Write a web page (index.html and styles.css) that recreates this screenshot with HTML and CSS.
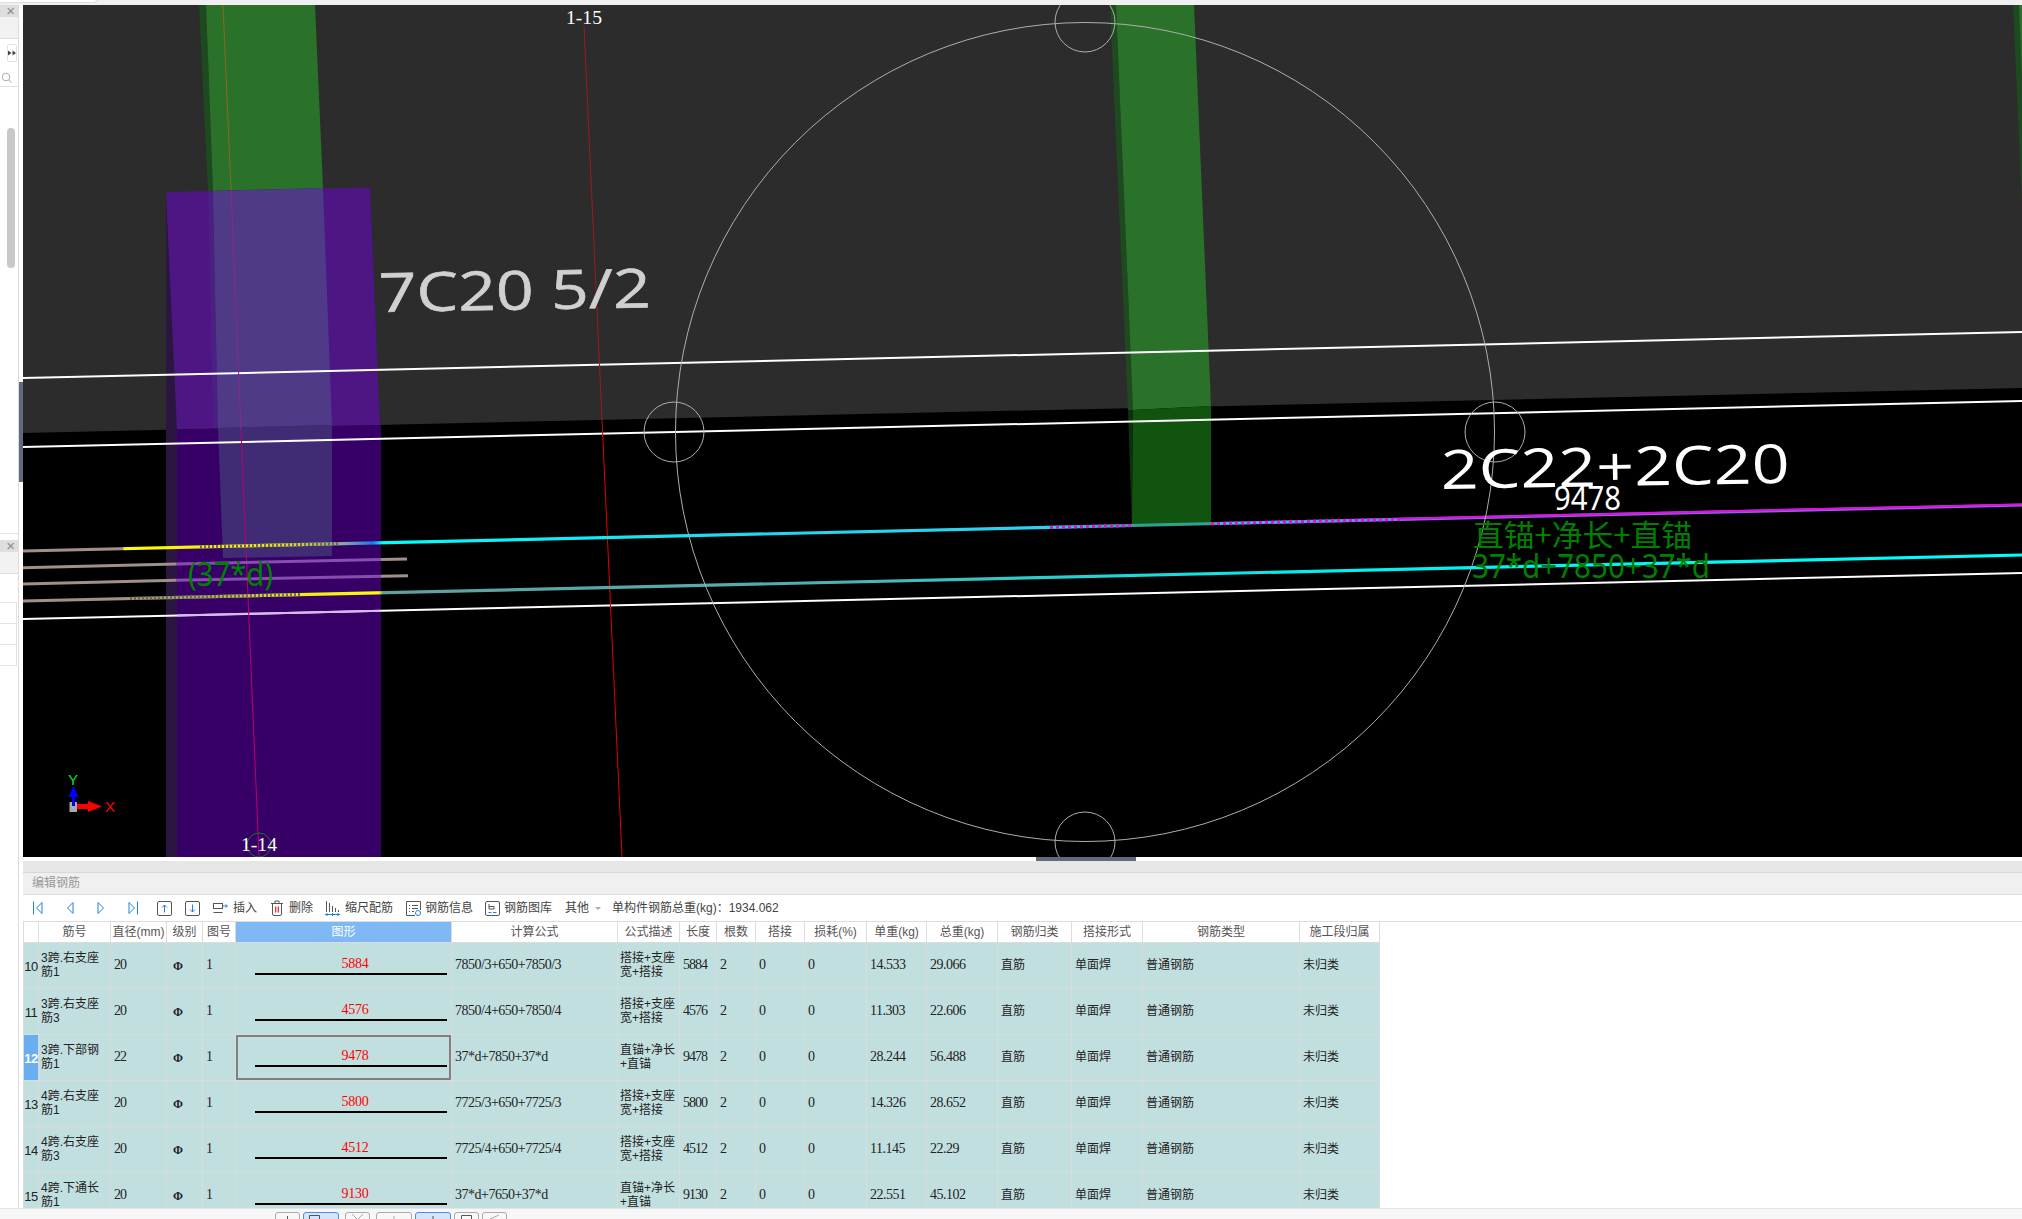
FILE: index.html
```html
<!DOCTYPE html>
<html lang="zh-CN">
<head>
<meta charset="utf-8">
<title>编辑钢筋</title>
<link rel="stylesheet" href="styles.css">
</head>
<body>
<div class="app">
  <div class="topbar"><div class="toptab"></div></div>
  <div class="workspace">
    <aside class="sidebar">
      <div class="side-inner">
        <div class="side-head">×</div>
        <div class="side-sub"></div>
        <div class="side-tools">
          <div class="side-btn"><svg width="8" height="6" viewBox="0 0 8 6" class="ico"><path d="M0 .5L3.5 3 0 5.5ZM4.5 .5L8 3 4.5 5.5Z" class="f-btn"/></svg></div>
        </div>
        <div class="side-search">
          <svg width="11" height="11" viewBox="0 0 11 11" class="ico"><circle cx="5" cy="5" r="3.8" class="s-gray"/><path d="M8 8l2.5 2.5" class="s-gray"/></svg>
        </div>
        <div class="side-scroll"><div class="thumb"></div></div>
        <div class="side-head">×</div>
        <div class="side-sub"></div>
        <div class="side-list">
          <div class="side-row"></div>
          <div class="side-row"></div>
          <div class="side-row"></div>
        </div>
      </div>
      <div class="side-gutter"><div class="gutter-handle"></div></div>
    </aside>
    <main class="main">
      <svg class="scene" width="1999" height="852" viewBox="23 5 1999 852">
        <defs>
          <linearGradient id="barTop" gradientUnits="userSpaceOnUse" x1="23" y1="0" x2="2022" y2="0">
            <stop offset="0" stop-color="#a09088"/><stop offset="0.05" stop-color="#a09088"/><stop offset="0.0505" stop-color="#ffff00"/>
            <stop offset="0.13" stop-color="#e8e020"/><stop offset="0.16" stop-color="#8aa8a0"/><stop offset="0.175" stop-color="#1a7af0"/>
            <stop offset="0.18" stop-color="#00ffff"/><stop offset="0.36" stop-color="#20d8f0"/><stop offset="0.515" stop-color="#30d0f0"/>
            <stop offset="0.555" stop-color="#30a090"/><stop offset="0.595" stop-color="#30a090"/><stop offset="0.6" stop-color="#40c0f0"/>
            <stop offset="0.72" stop-color="#9060f0"/><stop offset="1" stop-color="#a060f0"/>
          </linearGradient>
          <linearGradient id="barBottom" gradientUnits="userSpaceOnUse" x1="23" y1="0" x2="2022" y2="0">
            <stop offset="0" stop-color="#a09088"/><stop offset="0.05" stop-color="#a09088"/><stop offset="0.09" stop-color="#a8a860"/>
            <stop offset="0.13" stop-color="#e8e820"/><stop offset="0.178" stop-color="#ffff00"/><stop offset="0.18" stop-color="#60a0a0"/>
            <stop offset="0.4" stop-color="#50b0b0"/><stop offset="0.65" stop-color="#00f0f0"/><stop offset="1" stop-color="#00ffff"/>
          </linearGradient>
        </defs>
        <rect x="23" y="5" width="1999" height="852" class="f-black"/>
        <polygon points="23,5 2022,5 2022,388 23,433" class="f-upper"/>
        <polygon points="199,5 206,5 213,192 208,192" class="f-green-side"/>
        <polygon points="206,5 315,5 323,188 213,191" class="f-green"/>
        <polygon points="1110,5 1116,5 1133,410 1128,410" class="f-green-side"/>
        <polygon points="1128,410 1133,410 1132,526" class="f-green-side-low"/>
        <polygon points="1116,5 1194,5 1211,406 1133,410" class="f-green"/>
        <polygon points="1133,410 1211,406 1211,523 1132,526" class="f-green-low"/>
        <polygon points="2013,5 2022,5 2022,206" class="f-green-side"/>
        <polygon points="2019,5 2022,5 2022,80" class="f-green"/>
        <polygon points="166,192 177,430 177,857 166,857" class="f-purple-side"/>
        <polygon points="166,192 370,187.5 380,425 177,429.5" class="f-purple"/>
        <polygon points="177,429.5 380,425 381,425 381,857 177,857" class="f-purple-low"/>
        <polygon points="208,192 213,192 218,428 213,428" class="f-purple-strip"/>
        <polygon points="213,191 323,188 332,425 218,428" class="f-overlay"/>
        <polygon points="218,428 332,425 332,556 223,558" class="f-overlay-low"/>

        <line x1="23" y1="378" x2="2022" y2="332" class="s-white"/>
        <line x1="23" y1="447" x2="2022" y2="401" class="s-white"/>
        <line x1="23" y1="619" x2="2022" y2="573" class="s-white"/>
        <line x1="177" y1="615.4" x2="381" y2="610.8" class="s-pale"/>

        <line x1="584" y1="26" x2="602.5" y2="430" class="s-red-dim"/>
        <line x1="602.5" y1="430" x2="622" y2="857" class="s-red"/>
        <line x1="223" y1="5" x2="231" y2="190" class="s-tan"/>
        <line x1="231" y1="190" x2="241" y2="430" class="s-plum"/>
        <line x1="241" y1="430" x2="259" y2="857" class="s-magenta"/>

        <line x1="23" y1="567.7" x2="176" y2="564" class="s-bar-gray"/>
        <line x1="176" y1="564" x2="381" y2="559.6" class="s-bar-purple"/>
        <line x1="381" y1="559.6" x2="407" y2="559" class="s-bar-gray"/>
        <line x1="23" y1="584" x2="176" y2="580.2" class="s-bar-gray"/>
        <line x1="176" y1="580.2" x2="381" y2="576.2" class="s-bar-purple"/>
        <line x1="381" y1="576.2" x2="408" y2="575.7" class="s-bar-gray"/>
        <line x1="23" y1="551" x2="2022" y2="505" class="s-bar-top"/>
        <line x1="23" y1="601" x2="2022" y2="555" class="s-bar-bottom"/>
        <line x1="200" y1="547" x2="340" y2="543.7" class="s-dots-dark"/>
        <line x1="130" y1="598.5" x2="300" y2="594.6" class="s-dots-dark"/>
        <line x1="1050" y1="527.4" x2="1132" y2="525.5" class="s-dots-magenta"/>
        <line x1="1211" y1="523.7" x2="1400" y2="519.3" class="s-dots-magenta"/>
        <line x1="1400" y1="518.8" x2="2022" y2="504.5" class="s-thin-magenta"/>

        <circle cx="1085" cy="432" r="409.5" class="s-circle"/>
        <circle cx="1085" cy="22" r="30" class="s-circle"/>
        <circle cx="1085" cy="842" r="30" class="s-circle"/>
        <circle cx="674" cy="432" r="30" class="s-circle"/>
        <circle cx="1495" cy="432" r="30" class="s-circle"/>
        <circle cx="259" cy="845" r="12" class="s-axis-circle"/>

        <text x="379" y="312" class="t-big t-gray" textLength="272" lengthAdjust="spacingAndGlyphs" transform="rotate(-1 379 312)">7C20 5/2</text>
        <text x="1441" y="489" class="t-big t-white" textLength="349" lengthAdjust="spacingAndGlyphs" transform="rotate(-1 1441 489)">2C22+2C20</text>
        <text x="1554" y="510" class="t-mid t-white" textLength="67" lengthAdjust="spacingAndGlyphs">9478</text>
        <text x="1473" y="546" class="t-cjk t-green" textLength="219" lengthAdjust="spacingAndGlyphs">直锚+净长+直锚</text>
        <text x="1472" y="578" class="t-mid t-green" textLength="238" lengthAdjust="spacingAndGlyphs">37*d+7850+37*d</text>
        <text x="188" y="586" class="t-mid t-green" textLength="85" lengthAdjust="spacingAndGlyphs">(37*d)</text>
        <text x="241" y="851" class="t-axis t-white" textLength="36" lengthAdjust="spacingAndGlyphs">1-14</text>
        <text x="566" y="24" class="t-axis t-white" textLength="36" lengthAdjust="spacingAndGlyphs">1-15</text>

        <rect x="69.5" y="802" width="7.5" height="10" class="f-gizmo"/>
        <rect x="72" y="796" width="3" height="10" class="f-gblue"/>
        <polygon points="73.5,786 78.5,797 68.5,797" class="f-gblue"/>
        <rect x="77" y="804" width="11" height="5" class="f-gred"/>
        <polygon points="88,801 102,806.5 88,812" class="f-gred"/>
        <text x="105" y="812" class="t-gizmo t-red">X</text>
        <text x="68" y="785" class="t-gizmo t-lime">Y</text>
      </svg>
      <div class="hsplit"><div class="hsplit-handle"></div></div>
      <section class="panel">
        <div class="panel-strip"></div>
        <div class="panel-title">编辑钢筋</div>
        <div class="toolbar">
          <svg class="ico" width="11" height="14" viewBox="0 0 11 14"><path d="M1.5 .5v13M10 1.5L4.5 7 10 12.5Z" class="s-blue"/></svg>
          <svg class="ico" width="8" height="14" viewBox="0 0 8 14"><path d="M7 1.5L1.5 7 7 12.5Z" class="s-blue"/></svg>
          <svg class="ico" width="8" height="14" viewBox="0 0 8 14"><path d="M1 1.5L6.5 7 1 12.5Z" class="s-blue"/></svg>
          <svg class="ico" width="11" height="14" viewBox="0 0 11 14"><path d="M9.5 .5v13M1 1.5L6.5 7 1 12.5Z" class="s-blue"/></svg>
          <svg class="ico" width="15" height="15" viewBox="0 0 15 15"><rect x=".5" y=".5" width="14" height="14" rx="1.5" class="s-dark"/><path d="M7.5 11.5V4M5 6.5L7.5 4 10 6.5" class="s-blue"/></svg>
          <svg class="ico" width="15" height="15" viewBox="0 0 15 15"><rect x=".5" y=".5" width="14" height="14" rx="1.5" class="s-dark"/><path d="M7.5 3.5V11M5 8.5L7.5 11 10 8.5" class="s-blue"/></svg>
          <div class="tool"><svg class="ico" width="15" height="14" viewBox="0 0 15 14"><rect x=".5" y="2.5" width="9" height="5" class="s-dark"/><path d="M.5 11.5h9" class="s-dark"/><path d="M10 5h4M12.5 3.5L14.5 5l-2 1.5" class="s-blue"/></svg><span>插入</span></div>
          <div class="tool"><svg class="ico" width="14" height="16" viewBox="0 0 14 16"><path d="M1 3.5h12M5 3.5V1h4v2.5M2.5 3.5v10.5a1.5 1.5 0 0 0 1.5 1.5h6a1.5 1.5 0 0 0 1.5-1.5V3.5" class="s-dark"/><path d="M5.7 6.5v6M8.3 6.5v6" class="s-red-ico"/></svg><span>删除</span></div>
          <div class="tool"><svg class="ico" width="15" height="15" viewBox="0 0 15 15"><path d="M1.5 0v11M4.5 2v9M7.5 5v6M10.5 7v4M13.5 9v2" class="s-dark"/><path d="M0 13.5h15M2 12v3M7.5 12v3M13 12v3" class="s-blue"/></svg><span>缩尺配筋</span></div>
          <div class="tool tool-tight"><svg class="ico" width="15" height="15" viewBox="0 0 15 15"><path d="M9 14.5H.5V.5h14V9" class="s-dark"/><path d="M3 4.5h1M6 4.5h6M3 7.5h1M6 7.5h6M3 10.5h1M6 10.5h2" class="s-dark"/><circle cx="12" cy="12" r="2.5" class="s-blue"/></svg><span>钢筋信息</span></div>
          <div class="tool tool-tight"><svg class="ico" width="15" height="15" viewBox="0 0 15 15"><rect x=".5" y=".5" width="14" height="14" rx="1.5" class="s-dark"/><path d="M4 3v5h5V5.5H4" class="s-dark"/><path d="M3.5 11.5h3M8 11.5h3.5" class="s-blue"/></svg><span>钢筋图库</span></div>
          <div class="tool"><span>其他</span><span class="caret"></span></div>
          <div class="tool"><span>单构件钢筋总重(kg)：1934.062</span></div>
        </div>
        <div class="table-wrap">
          <table class="grid">
            <colgroup>
              <col class="c0"><col class="c1"><col class="c2"><col class="c3"><col class="c4"><col class="c5"><col class="c6"><col class="c7"><col class="c8"><col class="c9"><col class="c10"><col class="c11"><col class="c12"><col class="c13"><col class="c14"><col class="c15"><col class="c16"><col class="c17">
            </colgroup>
            <thead>
              <tr><th></th><th>筋号</th><th>直径(mm)</th><th>级别</th><th>图号</th><th class="active">图形</th><th>计算公式</th><th>公式描述</th><th>长度</th><th>根数</th><th>搭接</th><th>损耗(%)</th><th>单重(kg)</th><th>总重(kg)</th><th>钢筋归类</th><th>搭接形式</th><th>钢筋类型</th><th>施工段归属</th></tr>
            </thead>
            <tbody>
              <tr><td class="idx">10</td><td class="name">3跨.右支座<br>筋1</td><td class="num">20</td><td class="grade">Φ</td><td class="num">1</td><td class="shape"><div class="shape-val">5884</div><div class="shape-line"></div></td><td class="dec">7850/3+650+7850/3</td><td class="name">搭接+支座<br>宽+搭接</td><td class="num">5884</td><td class="num">2</td><td class="num">0</td><td class="num">0</td><td class="dec">14.533</td><td class="dec">29.066</td><td>直筋</td><td>单面焊</td><td>普通钢筋</td><td>未归类</td></tr>
              <tr><td class="idx">11</td><td class="name">3跨.右支座<br>筋3</td><td class="num">20</td><td class="grade">Φ</td><td class="num">1</td><td class="shape"><div class="shape-val">4576</div><div class="shape-line"></div></td><td class="dec">7850/4+650+7850/4</td><td class="name">搭接+支座<br>宽+搭接</td><td class="num">4576</td><td class="num">2</td><td class="num">0</td><td class="num">0</td><td class="dec">11.303</td><td class="dec">22.606</td><td>直筋</td><td>单面焊</td><td>普通钢筋</td><td>未归类</td></tr>
              <tr><td class="idx selected">12</td><td class="name">3跨.下部钢<br>筋1</td><td class="num">22</td><td class="grade">Φ</td><td class="num">1</td><td class="shape current"><div class="shape-val">9478</div><div class="shape-line"></div></td><td class="dec">37*d+7850+37*d</td><td class="name">直锚+净长<br>+直锚</td><td class="num">9478</td><td class="num">2</td><td class="num">0</td><td class="num">0</td><td class="dec">28.244</td><td class="dec">56.488</td><td>直筋</td><td>单面焊</td><td>普通钢筋</td><td>未归类</td></tr>
              <tr><td class="idx">13</td><td class="name">4跨.右支座<br>筋1</td><td class="num">20</td><td class="grade">Φ</td><td class="num">1</td><td class="shape"><div class="shape-val">5800</div><div class="shape-line"></div></td><td class="dec">7725/3+650+7725/3</td><td class="name">搭接+支座<br>宽+搭接</td><td class="num">5800</td><td class="num">2</td><td class="num">0</td><td class="num">0</td><td class="dec">14.326</td><td class="dec">28.652</td><td>直筋</td><td>单面焊</td><td>普通钢筋</td><td>未归类</td></tr>
              <tr><td class="idx">14</td><td class="name">4跨.右支座<br>筋3</td><td class="num">20</td><td class="grade">Φ</td><td class="num">1</td><td class="shape"><div class="shape-val">4512</div><div class="shape-line"></div></td><td class="dec">7725/4+650+7725/4</td><td class="name">搭接+支座<br>宽+搭接</td><td class="num">4512</td><td class="num">2</td><td class="num">0</td><td class="num">0</td><td class="dec">11.145</td><td class="dec">22.29</td><td>直筋</td><td>单面焊</td><td>普通钢筋</td><td>未归类</td></tr>
              <tr><td class="idx">15</td><td class="name">4跨.下通长<br>筋1</td><td class="num">20</td><td class="grade">Φ</td><td class="num">1</td><td class="shape"><div class="shape-val">9130</div><div class="shape-line"></div></td><td class="dec">37*d+7650+37*d</td><td class="name">直锚+净长<br>+直锚</td><td class="num">9130</td><td class="num">2</td><td class="num">0</td><td class="num">0</td><td class="dec">22.551</td><td class="dec">45.102</td><td>直筋</td><td>单面焊</td><td>普通钢筋</td><td>未归类</td></tr>
            </tbody>
          </table>
        </div>
      </section>
    </main>
  </div>
  <footer class="statusbar">
    <div class="sbtn"><svg width="23" height="6" viewBox="0 0 23 6" class="ico"><path d="M11.5 3v3" class="s-dark"/></svg></div>
    <div class="sbtn wide on"><svg width="34" height="6" viewBox="0 0 34 6" class="ico"><path d="M5.5 6V2.5h10V6" class="s-dark"/></svg></div>
    <div class="sbtn sep"><svg width="23" height="6" viewBox="0 0 23 6" class="ico"><path d="M6 1l5 5M17 1l-5 5" class="s-gray"/></svg></div>
    <div class="sbtn wide sep"><svg width="34" height="6" viewBox="0 0 34 6" class="ico"><path d="M17 3v3" class="s-gray"/></svg></div>
    <div class="sbtn wide on"><svg width="34" height="6" viewBox="0 0 34 6" class="ico"><path d="M17 3v3" class="s-dark"/></svg></div>
    <div class="sbtn"><svg width="23" height="6" viewBox="0 0 23 6" class="ico"><path d="M6.5 6V2.5h10V6" class="s-dark"/></svg></div>
    <div class="sbtn"><svg width="23" height="6" viewBox="0 0 23 6" class="ico"><path d="M7 6l9-4" class="s-gray"/></svg></div>
  </footer>
</div>
</body>
</html>
```
FILE: styles.css
```css
* { box-sizing: border-box; }
html, body { margin: 0; padding: 0; background: #fff; overflow: hidden; }
body { font: 12px/14px "Liberation Sans", "Noto Sans CJK SC", sans-serif; color: #222; }
.app { width: 2022px; height: 1219px; display: flex; flex-direction: column; }
.ico { display: block; flex: none; fill: none; }

.topbar { height: 5px; background: #f0f0f0; flex: none; }
.toptab { width: 97px; height: 3px; background: #fff; border: 1px solid #ddd; border-top: 0; border-left: 0; border-radius: 0 0 3px 0; }

.workspace { flex: 1; min-height: 0; display: flex; }

.sidebar { width: 23px; flex: none; display: flex; background: #fff; }
.side-inner { width: 19px; border-right: 1px solid #dcdcdc; display: flex; flex-direction: column; }
.side-head { height: 12px; background: #dedede; color: #8a8a8a; font-size: 15px; line-height: 12px; text-align: right; padding-right: 3px; flex: none; }
.side-sub { height: 22px; background: #f2f2f2; border-bottom: 1px solid #dedede; flex: none; }
.side-tools { height: 30px; padding: 5px 1px 0 7px; flex: none; display: flex; align-items: flex-start; }
.side-btn { width: 10px; height: 18px; border: 1px solid #e2e2e2; border-radius: 2px; display: flex; align-items: center; justify-content: center; overflow: hidden; }
.f-btn { fill: #444; }
.side-search { height: 18px; padding: 3px 0 0 1px; border-bottom: 1px solid #e2e2e2; flex: none; }
.side-scroll { height: 447px; border-bottom: 1px solid #e2e2e2; padding: 41px 0 0 7px; flex: none; }
.side-scroll + .side-head { margin-top: 6px; }
.thumb { width: 8px; height: 140px; background: #c8c8c8; border-radius: 4px; }
.side-list { padding-top: 28px; flex: none; }
.side-row { height: 21px; margin-right: 1px; border: 1px solid #e2e2e2; border-left: 0; border-bottom: 0; background: #fff; }
.side-row:last-child { border-bottom: 1px solid #e2e2e2; height: 22px; }
.side-gutter { flex: 1; padding-top: 377px; }
.gutter-handle { height: 100px; background: #5f6b78; }

.main { flex: 1; min-width: 0; display: flex; flex-direction: column; }
.scene { display: block; flex: none; }
.hsplit { height: 4px; background: #fff; flex: none; padding-left: 1013px; }
.hsplit-handle { width: 100px; height: 4px; background: #5f6b78; }

.panel { flex: 1; min-height: 0; display: flex; flex-direction: column; overflow: hidden; }
.panel-strip { height: 12px; background: #e6e6e6; border-bottom: 1px solid #d8d8d8; flex: none; }
.panel-title { height: 22px; background: #f0f0f0; border-bottom: 1px solid #dcdcdc; color: #999; padding-left: 9px; line-height: 21px; flex: none; }
.toolbar { height: 27px; flex: none; background: #fff; border-bottom: 1px solid #dcdcdc; padding-left: 9px; display: grid; grid-template-columns: 34px 31px 31px 29px 28px 28px 57px 55px 81px 79px 80px 47px 1fr; align-items: center; color: #444; }
.tool { display: flex; align-items: center; gap: 5px; white-space: nowrap; }
.tool-tight { gap: 4px; }
.caret { width: 0; height: 0; border: 3px solid transparent; border-top-color: #aaa; border-bottom: 0; margin-left: 1px; }

.s-blue { fill: none; stroke: #1f7fe8; stroke-width: 1; }
.s-dark { fill: none; stroke: #555; stroke-width: 1; }
.s-gray { fill: none; stroke: #aaa; stroke-width: 1; }
.s-red-ico { fill: none; stroke: #e02020; stroke-width: 1.2; }

.table-wrap { flex: 1; min-height: 0; overflow: hidden; background: #fff; }
.grid { width: 1356px; table-layout: fixed; border-collapse: collapse; }
.c0 { width: 15px; } .c1 { width: 72px; } .c2 { width: 56px; } .c3 { width: 36px; } .c4 { width: 33px; } .c5 { width: 216px; }
.c6 { width: 166px; } .c7 { width: 62px; } .c8 { width: 37px; } .c9 { width: 39px; } .c10 { width: 49px; } .c11 { width: 62px; }
.c12 { width: 60px; } .c13 { width: 71px; } .c14 { width: 74px; } .c15 { width: 71px; } .c16 { width: 157px; } .c17 { width: 80px; }
.grid th { height: 20px; padding: 0; font-weight: 400; color: #555; background: #fff; border: 1px solid #dcdcdc; border-top: 0; text-align: center; white-space: nowrap; overflow: hidden; }
.grid th.active { background: #7eb8f5; color: #fff; }
.grid td { height: 46px; padding: 0 3px; background: #c2dfe0; border: 1px solid #d8dcdc; white-space: nowrap; overflow: hidden; vertical-align: middle; }
.grid td.idx { padding: 3px 0 0; text-align: center; font-size: 13px; letter-spacing: -.5px; }
.grid td.idx.selected { background: #6aaef0; color: #fff; font-weight: 700; }
.grid td.name { padding: 0 0 0 2px; line-height: 14px; }
.grid td.num, .grid td.dec { font-family: "Liberation Serif", serif; font-size: 14px; padding-left: 3px; }
.grid td.num { letter-spacing: -1px; }
.grid td.dec { letter-spacing: -.5px; }
.grid td.grade { font-family: "Liberation Serif", serif; font-weight: 700; font-size: 12px; text-align: left; padding: 1px 0 0 6px; }
.grid td.shape { padding: 14px 4px 0 19px; vertical-align: top; }
.grid td.shape.current { box-shadow: inset 0 0 0 2px #808080; }
.shape-val { height: 14px; text-align: center; color: #f00; font-family: "Liberation Serif", serif; font-size: 14px; letter-spacing: -.2px; padding-left: 8px; }
.shape-line { height: 2px; margin-top: 2px; background: #000; }

.statusbar { height: 11px; flex: none; background: #f7f7f7; border-top: 1px solid #e4e4e4; padding: 3px 0 0 275px; display: flex; gap: 3px; overflow: hidden; }
.sbtn { width: 25px; height: 20px; border: 1px solid #aaa; border-radius: 3px 3px 0 0; background: #f7f7f7; flex: none; }
.sbtn.wide { width: 36px; }
.sbtn.on { background: #d3e4fb; border-color: #4a90e2; }
.sbtn.sep { margin-left: 3px; }

.f-black { fill: #000; }
.f-upper { fill: #2c2c2c; }
.f-green { fill: #2a712a; }
.f-green-low { fill: #11540f; }
.f-green-side { fill: #1d4a1e; }
.f-green-side-low { fill: #0c3010; }
.f-purple { fill: #4e1585; }
.f-purple-low { fill: #360066; }
.f-purple-side { fill: #2a1640; }
.f-purple-strip { fill: #4a2080; }
.f-overlay { fill: #4f3a87; }
.f-overlay-low { fill: #402c74; }
.f-gizmo { fill: #aaa; }
.f-gblue { fill: #0000ff; }
.f-gred { fill: #ff0000; }

.s-white { stroke: #fff; stroke-width: 2; }
.s-pale { stroke: #d8b8f0; stroke-width: 2; }
.s-red { stroke: #e80000; stroke-width: 1; }
.s-red-dim { stroke: #9a1c1c; stroke-width: 1; }
.s-tan { stroke: #8a6a20; stroke-width: 1; }
.s-plum { stroke: #8a2a80; stroke-width: 1; }
.s-magenta { stroke: #b8006e; stroke-width: 1; }
.s-bar-gray { stroke: #a09088; stroke-width: 3; }
.s-bar-purple { stroke: #8a4cb0; stroke-width: 3; }
.s-bar-top { stroke: url(#barTop); stroke-width: 3.2; }
.s-bar-bottom { stroke: url(#barBottom); stroke-width: 3.2; }
.s-dots-dark { stroke: #6a6a50; stroke-width: 3.2; stroke-dasharray: 2 2; }
.s-dots-magenta { stroke: #e010e0; stroke-width: 3.2; stroke-dasharray: 3 3; }
.s-thin-magenta { stroke: #e010e0; stroke-width: 2; }
.s-circle { fill: none; stroke: #aeaeae; stroke-width: 1; }
.s-axis-circle { fill: none; stroke: #0a7a20; stroke-width: 1; }

.t-big { font-family: "Open Sans", sans-serif; font-size: 54px; stroke-width: .6px; }
.t-mid { font-family: "Noto Sans", sans-serif; font-size: 32px; }
.t-cjk { font-family: "Noto Sans CJK SC", sans-serif; font-size: 30px; }
.t-axis { font-family: "Liberation Serif", serif; font-size: 19px; }
.t-gizmo { font-family: "Liberation Sans", sans-serif; font-size: 15px; }
.t-gray { fill: #d0d0d0; stroke: #d0d0d0; }
.t-white { fill: #fff; }
.t-green { fill: #008000; }
.t-red { fill: #ff0000; }
.t-lime { fill: #10e030; }
```
